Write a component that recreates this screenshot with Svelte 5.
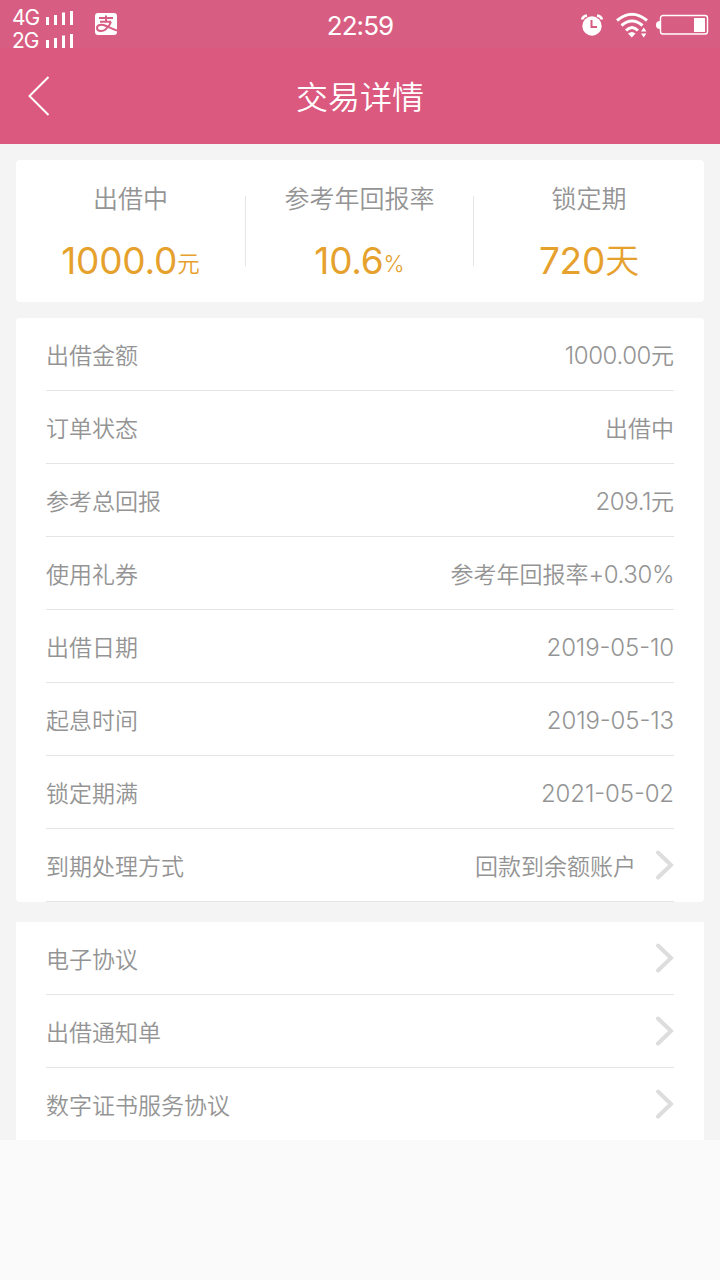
<script>
  const signals = ['4G', '2G'];

  const stats = [
    { label: '出借中', value: '1000.0', unit: '元', small: true },
    { label: '参考年回报率', value: '10.6', unit: '%', small: true },
    { label: '锁定期', value: '720', unit: '天', small: false },
  ];

  const details = [
    { label: '出借金额', num: '1000.00', after: '元' },
    { label: '订单状态', before: '出借中' },
    { label: '参考总回报', num: '209.1', after: '元' },
    { label: '使用礼券', before: '参考年回报率', num: '+0.30%' },
    { label: '出借日期', num: '2019-05-10', date: true },
    { label: '起息时间', num: '2019-05-13', date: true },
    { label: '锁定期满', num: '2021-05-02', date: true },
    { label: '到期处理方式', before: '回款到余额账户', link: true },
  ];

  const documents = ['电子协议', '出借通知单', '数字证书服务协议'];
</script>

{#snippet chevron()}
  <svg class="chevron" width="20" height="32" viewBox="0 0 20 32">
    <path d="M4 3.5L17 16L4 28.5" />
  </svg>
{/snippet}

<div class="page">
  <header>
    <div class="status-bar">
      <div class="status-left">
        <div class="signals">
          {#each signals as name}
            <div class="signal">
              <span>{name}</span>
              <svg width="28" height="15" viewBox="0 0 28 15">
                <path d="M0 7h3v8h-3zM8 5h3v10h-3zM16 2.500h3v12.500h-3zM24 1h3v14h-3z" />
              </svg>
            </div>
          {/each}
        </div>
        <svg class="pay" width="22" height="22" viewBox="0 0 22 22">
          <rect width="22" height="22" rx="3" fill="#fff" />
          <path d="M4 5H18M5 8.700H16M11 2.500V8.700M16 8.700C15 12 13 14.500 10.500 16.500C7.500 18.800 2 18.500 2 14.900C2 11.800 6.500 11 10 12.500C13.500 14 17 16 22 17.500" />
        </svg>
      </div>
      <time>22:59</time>
      <div class="status-right">
        <svg width="24" height="24" viewBox="0 0 24 24">
          <circle cx="12" cy="13" r="9.700" fill="#fff" />
          <path d="M2 6.500Q3 3 7 2.500M17 2.500Q21 3 22 6.500" stroke="#fff" stroke-width="2.500" fill="none" />
          <path d="M11.500 7V14H17" stroke="#d85b80" stroke-width="2" fill="none" />
        </svg>
        <svg width="34" height="26" viewBox="0 0 34 26">
          <path d="M2 8.500Q17 -4 32 8.500M6.500 13.500Q17 4.500 27.500 13.500M11 18.500Q17 12.500 23 18.500" stroke="#fff" stroke-width="3" fill="none" />
          <path d="M13 21.500Q17 18.500 20.500 21.500L16.800 25.500ZM26 19.500L28.700 15.500L31.400 19.500ZM26 21.500L28.700 25.500L31.400 21.500Z" fill="#fff" />
        </svg>
        <svg width="53" height="22" viewBox="0 0 53 22">
          <path d="M4 7Q0 7 0 11Q0 15 4 15Z" fill="#fff" />
          <rect x="4.500" y="1.500" width="47" height="18.500" rx="2.500" stroke="#fff" stroke-width="1.400" fill="none" />
          <rect x="38" y="4" width="11" height="14" fill="#fff" />
        </svg>
      </div>
    </div>
    <nav>
      <svg class="back" width="24" height="42" viewBox="0 0 24 42">
        <path d="M21.500 2L2.500 21L21.500 40" />
      </svg>
      <h1>交易详情</h1>
    </nav>
  </header>

  <main>
    <section class="card summary">
      {#each stats as stat}
        <div class="stat">
          <span class="stat-label">{stat.label}</span>
          <strong>
            <span class="figure">{stat.value}</span>
            <span class="unit" class:small={stat.small}>{stat.unit}</span>
          </strong>
        </div>
      {/each}
    </section>

    <section class="card details">
      {#each details as row}
        <div class="row">
          <span>{row.label}</span>
          <span class="value">
            {#if row.before}<span>{row.before}</span>{/if}
            {#if row.num}<span class="num" class:date={row.date}>{row.num}</span>{/if}
            {#if row.after}<span>{row.after}</span>{/if}
            {#if row.link}{@render chevron()}{/if}
          </span>
        </div>
      {/each}
    </section>

    <section class="card documents">
      {#each documents as name}
        <div class="row">
          <span>{name}</span>
          {@render chevron()}
        </div>
      {/each}
    </section>
  </main>
</div>

<style>
  :global(body) {
    background: #fafafa;
  }

  .page {
    width: 720px;
    min-height: 1280px;
    background: #fafafa;
    color: #949494;
    font-family: Inter, 'Noto Sans CJK SC', sans-serif;
    font-weight: 350;
  }

  header {
    height: 144px;
    background: #db587e;
    color: #fff;
  }

  .status-bar {
    display: grid;
    grid-template-columns: 1fr auto 1fr;
    align-items: center;
    height: 48px;
    padding: 0 12px;
    background: #d85d82;
  }

  .status-left {
    display: flex;
    align-items: center;
    gap: 21px;
  }

  .signals {
    margin-top: 6px;
  }

  .signal {
    display: flex;
    align-items: center;
    height: 23px;
    font-size: 21px;
    font-weight: 400;
    line-height: 23px;
    letter-spacing: -1px;
  }
  .signal span {
    width: 34px;
  }
  .signal svg {
    fill: #fff;
  }

  .pay {
    margin-bottom: 4px;
  }
  .pay path {
    fill: none;
    stroke: #d85d82;
    stroke-width: 2;
  }

  time {
    font-size: 26px;
    font-weight: 400;
    line-height: 48px;
    letter-spacing: -0.9px;
  }

  .status-right {
    display: flex;
    align-items: center;
    justify-content: flex-end;
    gap: 7px;
    margin: 0 -1px 2px 0;
  }
  .status-right svg:first-child {
    margin: 0 4px 0 0;
  }

  nav {
    display: grid;
    grid-template-columns: 60px 1fr 60px;
    align-items: center;
    height: 96px;
  }

  .back {
    margin-left: 27px;
    fill: none;
    stroke: #fff;
    stroke-width: 2;
  }

  h1 {
    margin: 0 0 2px;
    font-size: 32px;
    font-weight: 350;
    text-align: center;
  }

  main {
    padding: 16px 16px 0;
    background: #f4f4f4;
  }

  .card {
    background: #fff;
    border-radius: 4px;
  }

  .summary {
    display: grid;
    grid-template-columns: 230px 228px 1fr;
    align-items: center;
    height: 142px;
    margin-bottom: 16px;
  }

  .stat {
    display: flex;
    flex-direction: column;
    align-items: center;
    height: 70px;
  }
  .stat:not(:last-child) {
    border-right: 1px solid #e5e5e5;
  }

  .stat-label {
    margin-top: -15px;
    font-size: 25px;
    line-height: 36px;
  }

  strong {
    display: flex;
    align-items: baseline;
    margin-top: 19px;
    color: #e6a12d;
    font-weight: 350;
    line-height: 50px;
  }
  .figure {
    font-size: 37px;
    font-weight: 400;
    letter-spacing: -0.2px;
  }
  .unit {
    font-size: 34px;
    transform: translateY(-1px);
  }
  .unit.small {
    font-size: 22.5px;
    transform: translateY(-2px);
  }

  .row {
    display: flex;
    align-items: center;
    justify-content: space-between;
    height: 72px;
    margin: 0 30px;
    border-bottom: 1px solid #e5e5e5;
    font-size: 23px;
  }

  .value {
    display: flex;
    align-items: center;
  }

  .num {
    padding-top: 2px;
    font-size: 24px;
    letter-spacing: -0.4px;
  }
  .num.date {
    font-feature-settings: 'case';
    letter-spacing: -0.1px;
  }

  .details {
    margin-bottom: 20px;
  }

  .documents {
    border-radius: 0;
  }
  .documents .row:last-child {
    border-bottom: 0;
  }

  .chevron {
    fill: none;
    stroke: #ddd;
    stroke-width: 4;
    stroke-linecap: round;
  }
  .value .chevron {
    margin-left: 18px;
  }
</style>
